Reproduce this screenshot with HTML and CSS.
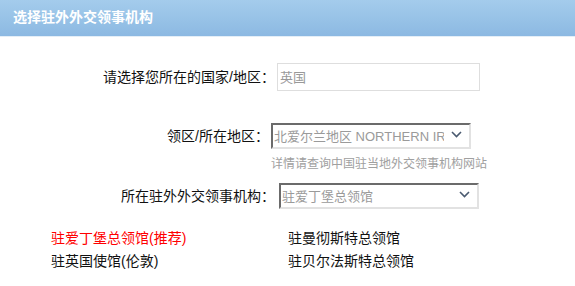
FILE: index.html
```html
<!DOCTYPE html>
<html lang="zh-CN">
<head>
    <meta charset="UTF-8">
    <title>选择驻外外交领事机构</title>
    <link rel="stylesheet" href="styles.css">
</head>
<body>
    <div class="panel-head">选择驻外外交领事机构</div>

    <form class="mission-form">
        <div class="form-row row-country">
            <label for="country">请选择您所在的国家/地区：</label>
            <input type="text" id="country" class="text-field" placeholder="英国">
        </div>

        <div class="form-row row-district">
            <label for="district">领区/所在地区：</label>
            <div class="select-box">
                <select id="district" disabled>
                    <option>北爱尔兰地区 NORTHERN IRELAND</option>
                </select>
                <svg class="chevron" width="11" height="7" viewBox="0 0 11 7"><path d="M1 1l4.5 4.5L10 1" fill="none" stroke="#4a5a70" stroke-width="1.6"/></svg>
            </div>
        </div>
        <p class="hint">详情请查询中国驻当地外交领事机构网站</p>

        <div class="form-row row-mission">
            <label for="mission">所在驻外外交领事机构：</label>
            <div class="select-box">
                <select id="mission" disabled>
                    <option>驻爱丁堡总领馆</option>
                </select>
                <svg class="chevron" width="11" height="7" viewBox="0 0 11 7"><path d="M1 1l4.5 4.5L10 1" fill="none" stroke="#4a5a70" stroke-width="1.6"/></svg>
            </div>
        </div>
    </form>

    <ul class="mission-list">
        <li class="recommended">驻爱丁堡总领馆(推荐)</li>
        <li>驻曼彻斯特总领馆</li>
        <li>驻英国使馆(伦敦)</li>
        <li>驻贝尔法斯特总领馆</li>
    </ul>
</body>
</html>
```

FILE: styles.css
```css
body {
    margin: 0;
    font-family: "Liberation Sans", "Noto Sans CJK SC", sans-serif;
    font-size: 14px;
    color: #111;
    background: #fff;
}

.panel-head {
    height: 36px;
    line-height: 34px;
    padding-left: 13px;
    color: #fff;
    font-weight: bold;
    font-size: 14px;
    background: linear-gradient(#a4ccec, #8cb9e2);
    border-bottom: 1px solid #e4eef7;
}

.mission-form {
    padding-top: 26px;
}

.form-row {
    display: flex;
    align-items: center;
}

.form-row label {
    width: 275px;
    text-align: right;
    line-height: 20px;
}

.text-field {
    margin-left: 2px;
    width: 203px;
    height: 28px;
    box-sizing: border-box;
    border: 1px solid #dedede;
    padding: 0 2px;
    font-family: inherit;
    font-size: 13px;
    color: #999;
}

.text-field::placeholder {
    color: #999;
}

.select-box {
    position: relative;
    width: 200px;
    height: 26px;
    box-sizing: border-box;
    border-top: 2px solid #6b6b6b;
    border-left: 2px solid #6b6b6b;
    border-right: 2px solid #e2e2e2;
    border-bottom: 2px solid #e2e2e2;
    overflow: hidden;
}

.select-box select {
    appearance: none;
    width: 100%;
    height: 100%;
    border: none;
    padding: 0 25px 0 1px;
    background: #fff;
    font-family: inherit;
    font-size: 13px;
    color: #9a9a9a;
    opacity: 1;
}

.chevron {
    position: absolute;
    right: 7px;
    top: 6px;
}

.row-country {
    height: 28px;
}

.row-district {
    margin-top: 32px;
}

.row-district label {
    width: 269px;
}

.row-district .select-box {
    margin-left: 2px;
}

.hint {
    margin: 6px 0 0 271px;
    font-size: 12px;
    line-height: 18px;
    color: #a0a0a0;
}

.row-mission {
    margin-top: 10px;
}

.row-mission .select-box {
    margin-left: 4px;
}

.mission-list {
    list-style: none;
    margin: 19px 0 0;
    padding: 0 0 0 51px;
    display: grid;
    grid-template-columns: 237px auto;
    row-gap: 3px;
}

.mission-list li {
    line-height: 20px;
}

.recommended {
    color: #ff0000;
}
```
